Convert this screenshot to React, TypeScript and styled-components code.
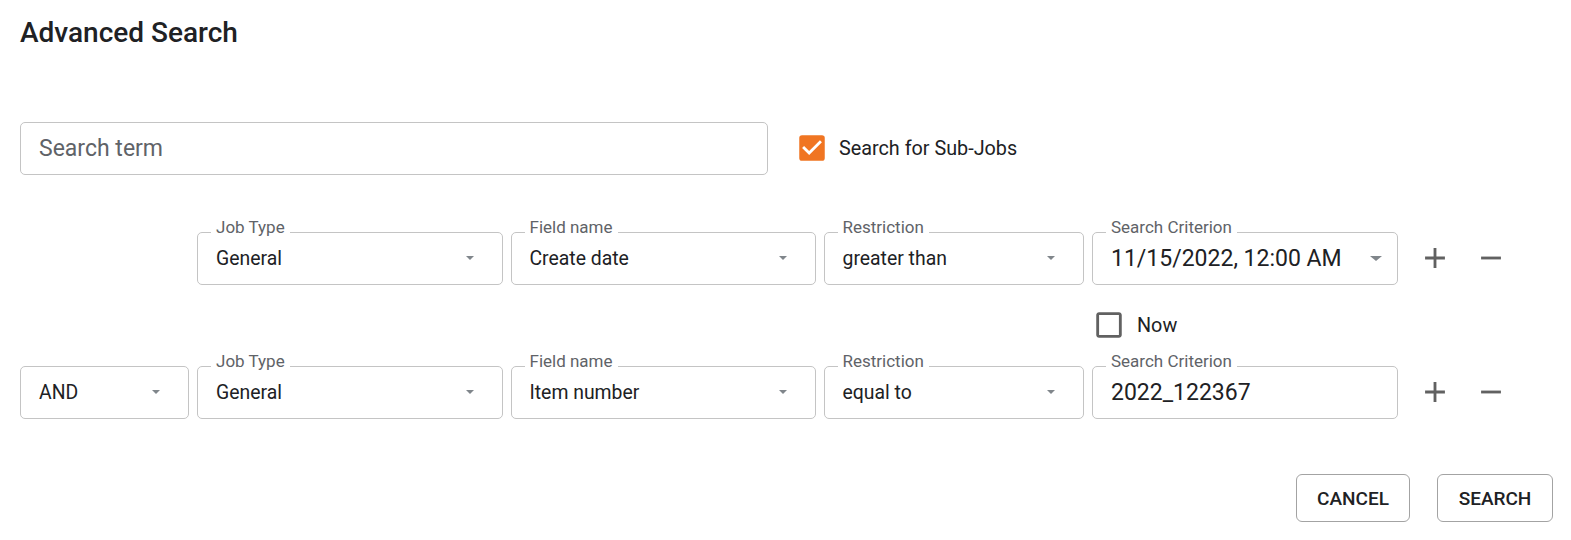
import React from 'react';
import styled, { createGlobalStyle } from 'styled-components';

// Layout constants taken from the reference
const COLUMNS = '169px 305.5px 305px 260.5px 306px auto';

const GlobalStyle = createGlobalStyle`
  body {
    margin: 0;
    background: #ffffff;
    font-family: Roboto, "Liberation Sans", Arial, sans-serif;
    color: #202124;
  }
`;

const Page = styled.div`
  padding: 16px 18px 18px 20px;
`;

const Title = styled.h2`
  margin: 0;
  font-size: 28px;
  line-height: 1.2;
  font-weight: 500;
  color: #202124;
`;

const SearchRow = styled.div`
  display: flex;
  align-items: center;
  margin-top: 72px;
  height: 53px;
`;

const TermBox = styled.div`
  width: 748px;
  height: 53px;
  box-sizing: border-box;
  border: 1px solid #c4c4c4;
  border-radius: 5px;
  display: flex;
  align-items: center;
  padding: 0 18px;
  font-size: 23px;
  color: #5f6368;
`;

const CheckLabel = styled.label<{ $gap: number }>`
  display: flex;
  align-items: center;
  gap: ${(p) => p.$gap}px;
  font-size: 19.8px;
  color: #202124;
  cursor: pointer;
`;

const SubJobs = styled(CheckLabel)`
  margin-left: 27px;
`;

const CriteriaGrid = styled.div`
  display: grid;
  grid-template-columns: ${COLUMNS};
  column-gap: 8px;
  row-gap: 23.5px;
  margin-top: 57px;
  align-items: center;
`;

const Field = styled.div<{ $big?: boolean }>`
  position: relative;
  height: 53px;
  box-sizing: border-box;
  border: 1px solid #c4c4c4;
  border-radius: 5px;
  display: flex;
  align-items: center;
  padding: 0 ${(p) => (p.$big ? 15 : 28)}px 0 18px;
  font-size: ${(p) => (p.$big ? 23 : 19.4)}px;
  color: #202124;
`;

const FloatLabel = styled.span`
  position: absolute;
  top: -15px;
  left: 13px;
  padding: 0 5px;
  background: #ffffff;
  font-size: 17px;
  line-height: 19px;
  color: #5f6368;
  white-space: nowrap;
`;

const Value = styled.span`
  flex: 1;
  white-space: nowrap;
`;

const Caret = styled.span<{ $wide?: boolean }>`
  width: 0;
  height: 0;
  border-left: ${(p) => (p.$wide ? 6 : 4.5)}px solid transparent;
  border-right: ${(p) => (p.$wide ? 6 : 4.5)}px solid transparent;
  border-top: ${(p) => (p.$wide ? 5 : 4.5)}px solid #80868b;
`;

const IconGroup = styled.div`
  display: flex;
  margin-left: 1px;
`;

const IconButton = styled.button`
  width: 56px;
  height: 53px;
  border: none;
  background: none;
  padding: 0;
  display: flex;
  align-items: center;
  justify-content: center;
  cursor: pointer;
  color: #616161;
`;

const NowCell = styled.div`
  grid-column: 5 / -1;
  height: 34px;
  display: flex;
  align-items: center;
`;

const Actions = styled.div`
  display: flex;
  justify-content: flex-end;
  gap: 27px;
  margin-top: 55.5px;
`;

const ActionButton = styled.button<{ $width: number }>`
  width: ${(p) => p.$width}px;
  height: 48px;
  border: 1px solid #a3a3a3;
  border-radius: 6px;
  background: #ffffff;
  font-family: Roboto, "Liberation Sans", Arial, sans-serif;
  font-size: 19px;
  font-weight: 500;
  color: #202124;
  cursor: pointer;
`;

const Checkbox: React.FC<{ checked?: boolean }> = ({ checked }) =>
  checked ? (
    <svg width="34" height="34" viewBox="0 0 24 24">
      <rect x="3" y="3" width="18" height="18" rx="2" fill="#f07522" />
      <path d="M10 17l-5-5 1.41-1.41L10 14.17l7.59-7.59L19 8l-9 9z" fill="#ffffff" />
    </svg>
  ) : (
    <svg width="34" height="34" viewBox="0 0 24 24">
      <path
        d="M19 5v14H5V5h14m0-2H5c-1.1 0-2 .9-2 2v14c0 1.1.9 2 2 2h14c1.1 0 2-.9 2-2V5c0-1.1-.9-2-2-2z"
        fill="#616161"
      />
    </svg>
  );

const PlusMinus: React.FC = () => (
  <IconGroup>
    <IconButton aria-label="add">
      <svg width="34" height="34" viewBox="0 0 24 24" fill="currentColor">
        <path d="M19 13h-6v6h-2v-6H5v-2h6V5h2v6h6v2z" />
      </svg>
    </IconButton>
    <IconButton aria-label="remove">
      <svg width="34" height="34" viewBox="0 0 24 24" fill="currentColor">
        <path d="M19 13H5v-2h14v2z" />
      </svg>
    </IconButton>
  </IconGroup>
);

type Criterion = {
  op?: string;
  jobType: string;
  field: string;
  restriction: string;
  value: string;
  valueIsSelect: boolean;
};

const rows: Criterion[] = [
  { jobType: 'General', field: 'Create date', restriction: 'greater than', value: '11/15/2022, 12:00 AM', valueIsSelect: true },
  { op: 'AND', jobType: 'General', field: 'Item number', restriction: 'equal to', value: '2022_122367', valueIsSelect: false },
];

const SelectField: React.FC<{ label?: string; value: string }> = ({ label, value }) => (
  <Field>
    {label && <FloatLabel>{label}</FloatLabel>}
    <Value>{value}</Value>
    <Caret />
  </Field>
);

const App: React.FC = () => {
  return (
    <Page>
      <GlobalStyle />
      <Title>Advanced Search</Title>

      <SearchRow>
        <TermBox>Search term</TermBox>
        <SubJobs $gap={10}>
          <Checkbox checked />
          Search for Sub-Jobs
        </SubJobs>
      </SearchRow>

      <CriteriaGrid>
        {rows.map((row, i) => (
          <React.Fragment key={i}>
            {row.op ? <SelectField value={row.op} /> : <div />}
            <SelectField label="Job Type" value={row.jobType} />
            <SelectField label="Field name" value={row.field} />
            <SelectField label="Restriction" value={row.restriction} />
            <Field $big>
              <FloatLabel>Search Criterion</FloatLabel>
              <Value>{row.value}</Value>
              {row.valueIsSelect && <Caret $wide />}
            </Field>
            <PlusMinus />
            {i === 0 && (
              <NowCell>
                <CheckLabel $gap={11}>
                  <Checkbox />
                  Now
                </CheckLabel>
              </NowCell>
            )}
          </React.Fragment>
        ))}
      </CriteriaGrid>

      <Actions>
        <ActionButton $width={114}>CANCEL</ActionButton>
        <ActionButton $width={116}>SEARCH</ActionButton>
      </Actions>
    </Page>
  );
};

export default App;
